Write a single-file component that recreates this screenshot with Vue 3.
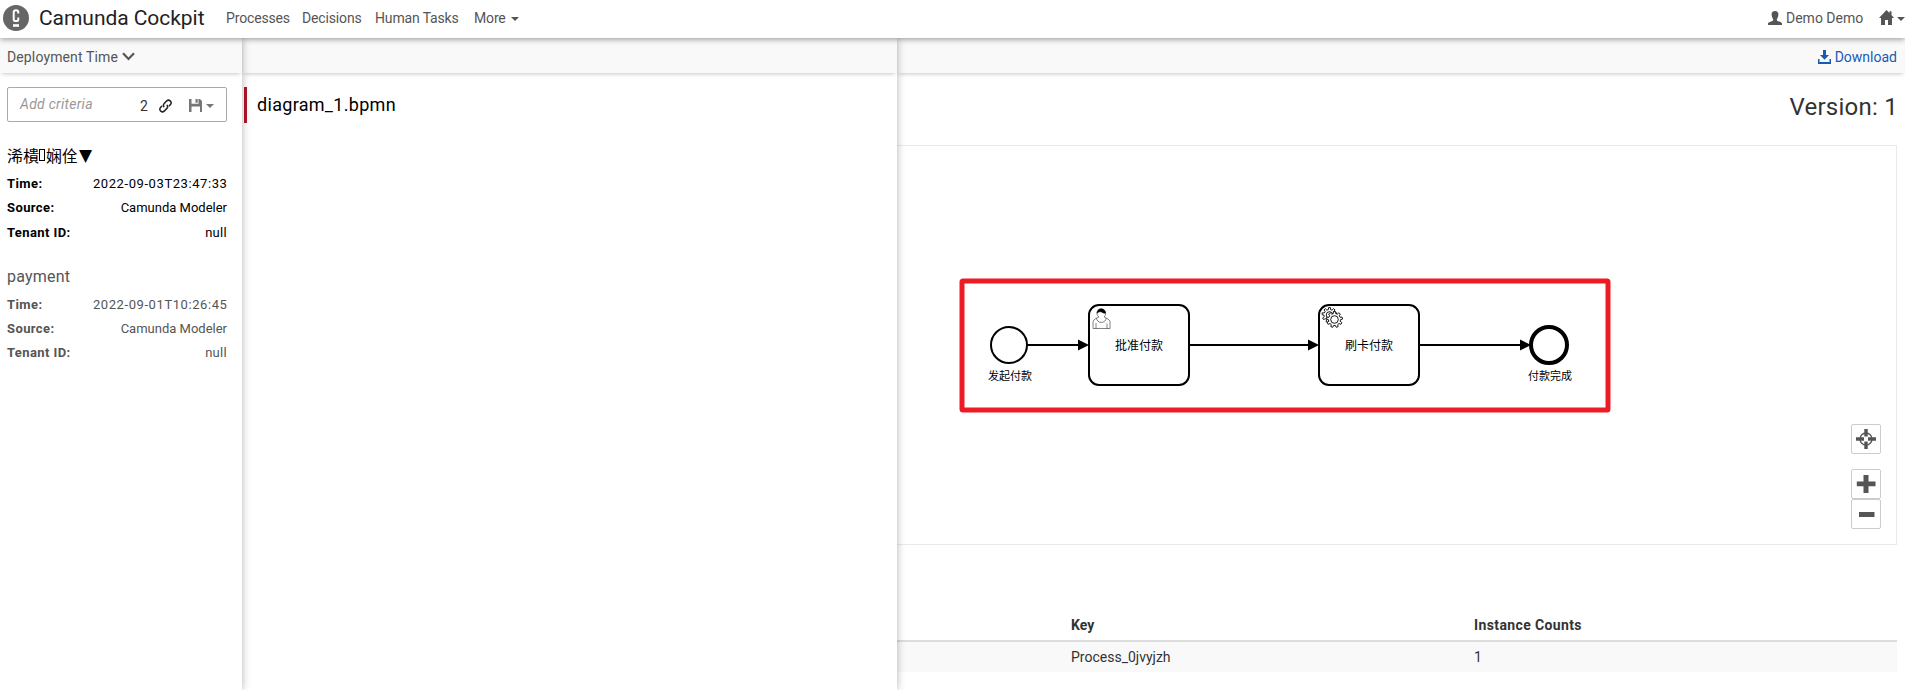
<script setup>
const deployments = [
  { active: true, time: '2022-09-03T23:47:33' },
  { active: false, name: 'payment', time: '2022-09-01T10:26:45' },
]

// Outline of a cog wheel with evenly spaced teeth.
function gear(cx, cy, outer, inner, teeth) {
  const step = (Math.PI * 2) / teeth
  const at = (r, a) => `${(cx + r * Math.cos(a)).toFixed(2)},${(cy + r * Math.sin(a)).toFixed(2)}`
  const pts = []
  for (let i = 0; i < teeth; i++) {
    const a = i * step - Math.PI / 2
    pts.push(at(inner, a - step * 0.3), at(outer, a - step * 0.18), at(outer, a + step * 0.18), at(inner, a + step * 0.3))
  }
  return `M${pts.join('L')}Z`
}
const backGear = gear(1329.5, 315, 7.5, 5.5, 9)
const frontGear = gear(1334.5, 319.5, 8, 6, 9)
</script>

<template>
  <div class="page">
    <header class="top">
      <svg class="logo" width="26" height="26" viewBox="0 0 26 26">
        <circle cx="13" cy="13" r="13" fill="#666" />
        <path d="M15.300 8.600V7.200Q15.300 5.300 13 5.300T10.700 7.200V14.200Q10.700 16.100 13 16.100T15.300 14.200V12.600" fill="none" stroke="#fff" stroke-width="2" />
        <path d="M10 19.200h6v2.600h-6z" fill="#fff" />
      </svg>
      <span class="brand">Camunda Cockpit</span>
      <nav class="nav">
        <a class="n1">Processes</a><a class="n2">Decisions</a><a class="n3">Human Tasks</a>
        <a class="n4">More</a><i class="caret"></i>
      </nav>
      <div class="account">
        <svg width="14" height="14" viewBox="0 0 14 14"><path d="M7 0C4.500 0 3.500 1.500 3.600 3.600 3.700 5.900 4.500 7.200 5.100 8V9.400C4.700 10.200 0 11.100 0 12.400V14H14V12.400C14 11.100 9.300 10.200 8.900 9.400V8C9.500 7.200 10.300 5.900 10.400 3.600 10.500 1.500 9.500 0 7 0Z" fill="#555" /></svg>
        <span class="user">Demo Demo</span>
        <svg class="home" width="15" height="15" viewBox="0 0 15 15"><path d="M7.500 0L10.500 3V1.200H12.500V5L15 8H13V15H9V10H6V15H2V8H0Z" fill="#555" /></svg>
        <i class="caret"></i>
      </div>
    </header>

    <div class="body">
      <aside class="col deployments">
        <div class="bar">
          <span class="sort">Deployment Time</span>
          <svg class="chev" width="13" height="9" viewBox="0 0 13 9"><path d="M1 1.300L6.500 7L12 1.300" fill="none" stroke="#555" stroke-width="2.200" /></svg>
        </div>
        <div class="search">
          <span class="criteria">Add criteria</span>
          <span class="count">2</span>
          <svg class="link" width="13" height="14" viewBox="0 0 13 14" fill="none" stroke="#222" stroke-width="1.500" stroke-linecap="round"><path d="M4.800 7.600Q3.800 6 5.200 4.500L7.800 1.800Q9.500.4 11.200 1.900T11.700 5.200L10.300 6.700" /><path d="M8.200 6.300Q9.300 8 7.900 9.400L5.200 12.200Q3.500 13.600 1.800 12.100T1.300 8.800L2.700 7.300" /></svg>
          <svg class="save" width="13" height="13" viewBox="0 0 13 13"><path d="M0 0H2.500V4.700H9.500V0H11L13 2V13H11V7.500H2.500V13H0ZM6.500 0H8.700V3.700H6.500Z" fill="#777" fill-rule="evenodd" /></svg>
          <i class="caret grey"></i>
        </div>
        <section v-for="d in deployments" :key="d.time" class="deployment" :class="{ active: d.active }">
          <h4 v-if="d.name">{{ d.name }}</h4>
          <h4 v-else class="cjk">浠樻<i class="missing"></i>娴佺<span class="tri">▼</span></h4>
          <dl>
            <div><dt>Time:</dt><dd class="date">{{ d.time }}</dd></div>
            <div><dt>Source:</dt><dd>Camunda Modeler</dd></div>
            <div><dt>Tenant ID:</dt><dd class="null">null</dd></div>
          </dl>
        </section>
      </aside>

      <aside class="col resources">
        <div class="bar"></div>
        <div class="resource">diagram_1.bpmn</div>
      </aside>

      <main class="detail">
        <div class="bar right">
          <svg width="13" height="14" viewBox="0 0 13 14"><path d="M5 0H8V5H11L6.500 9.800L2 5H5ZM0 9H1.500V12H11.500V9H13V14H0Z" fill="#155cb5" /></svg>
          <span class="download">Download</span>
        </div>
        <h3 class="version">Version: 1</h3>
        <div class="diagram">
          <svg class="canvas" width="999" height="398" viewBox="897 146 999 398">
            <g fill="none" stroke="#000" stroke-width="2">
              <circle cx="1009" cy="345" r="18" />
              <rect x="1089" y="305" width="100" height="80" rx="10" />
              <rect x="1319" y="305" width="100" height="80" rx="10" />
              <path d="M1027 345H1080M1189 345H1310M1419 345H1522" />
              <circle cx="1549" cy="345" r="18" stroke-width="4" />
            </g>
            <path d="M1078 339.500L1089 345L1078 350.500ZM1308 339.500L1319 345L1308 350.500ZM1520 339.500L1531 345L1520 350.500Z" />
            <g transform="translate(1089 305)" stroke="#000" stroke-width=".5">
              <path fill="#fff" d="m15,12c.909-.845 1.594-2.049 1.594-3.385 0-2.554-1.805-4.622-4.357-4.622-2.552 0-4.288 2.068-4.288 4.622 0 1.348.974 2.562 1.896 3.405-.529.187-5.669 2.097-5.794 4.756v6.718h17v-6.718c0-2.298-5.528-4.595-6.051-4.776zm-8,6l0,5.500m11,0l0-5" />
              <path fill="#fff" d="m17.162,13.009c0,2.447-2.158,4.431-4.821,4.431-2.665,0-4.822-1.981-4.822-4.431" />
              <path d="m8.100,8.200c0,0 2.251-2.358 4.274-1.177 2.024,1.181 4.221,1.537 4.124.965-.098-.57-.117-3.791-4.191-4.136-3.572,0-4.208,3.067-4.207,4.348z" />
            </g>
            <g fill="#fff" stroke="#000" stroke-width=".9">
              <path :d="backGear" /><circle cx="1329.500" cy="315" r="3.300" />
              <path :d="frontGear" /><circle cx="1334.500" cy="319.500" r="3.800" />
            </g>
            <g class="label" text-anchor="middle">
              <text x="1010" y="380" font-size="11">发起付款</text>
              <text x="1139" y="349.500" font-size="12">批准付款</text>
              <text x="1369" y="349.500" font-size="12">刷卡付款</text>
              <text x="1550" y="380" font-size="11">付款完成</text>
            </g>
            <rect x="962" y="281" width="646" height="129" rx="1" fill="none" stroke="#ed1c24" stroke-width="5" />
          </svg>
          <div class="controls">
            <button class="reset"><svg width="20" height="20" viewBox="0 0 20 20"><circle cx="10" cy="10" r="6" fill="none" stroke="#555" stroke-width="1.300" /><path d="M8.300 0H11.700V7.500H8.300ZM8.300 12.500H11.700V20H8.300ZM0 8.200H8V11.800H0ZM12 8.200H20V11.800H12Z" fill="#555" /></svg></button>
            <button class="plus"><svg width="20" height="20" viewBox="0 0 20 20"><path d="M7.500 1H12.500V7.500H19.500V12.300H12.500V19H7.500V12.300H.8V7.500H7.500Z" fill="#555" /></svg></button>
            <button class="minus"><svg width="20" height="20" viewBox="0 0 20 20"><path d="M3 8H18.500V13H3Z" fill="#555" /></svg></button>
          </div>
        </div>
        <table class="definitions">
          <thead><tr><th class="name"></th><th class="key">Key</th><th class="counts">Instance Counts</th></tr></thead>
          <tbody><tr><td></td><td>Process_0jvyjzh</td><td>1</td></tr></tbody>
        </table>
      </main>
    </div>
  </div>
</template>

<style>
body { margin: 0; overflow: hidden; background: #fff; }
</style>

<style scoped>
.page { height: 690px; display: flex; flex-direction: column; overflow: hidden; font: 14px/20px Roboto, "Noto Sans CJK SC", sans-serif; color: #333; white-space: nowrap; }
.page *, .page { box-sizing: border-box; }
svg { display: block; flex: none; }
.top { position: relative; z-index: 5; flex: none; height: 38px; display: flex; align-items: center; padding: 0 0 2px 3px; background: #fff; color: #555; box-shadow: 0 1px 6px rgba(0, 0, 0, .42); }
.logo { margin-top: -1px; }
.brand { margin-left: 10px; width: 187px; font-size: 21px; color: #222; letter-spacing: -.05px; }
.nav { display: flex; align-items: center; letter-spacing: -.15px; }
.n1 { width: 76px; } .n2 { width: 73px; } .n3 { width: 99px; } .n4 { width: 37px; }
.caret { flex: none; width: 0; height: 0; border: 4px solid transparent; border-top-color: #555; border-bottom: 0; margin-top: 2px; }
.caret.grey { border-top-color: #777; }
.account { margin-left: auto; width: 137px; display: flex; align-items: center; }
.user { margin-left: 4px; width: 93px; }
.home { margin: -1px 3px 0 0; }
.body { flex: 1; min-height: 0; display: flex; }
.col { position: relative; flex: none; background: #fff; box-shadow: 0 0 8px rgba(0, 0, 0, .3); }
.deployments { z-index: 3; width: 242px; }
.resources { z-index: 2; width: 655px; }
.detail { flex: 1; min-width: 0; }
.bar { height: 35px; display: flex; align-items: center; padding: 2px 8px 0 7px; background: #f9f9f9; box-shadow: 0 3px 4px -2px rgba(0, 0, 0, .22); color: #555; }
.sort { letter-spacing: .13px; }
.chev { margin-left: 4px; }
.search { height: 35px; margin: 14px 15px 0 7px; padding: 0 12px; display: flex; align-items: center; border: 1px solid #aaa; border-radius: 2px; }
.criteria { width: 120px; color: #999; font-style: italic; padding-bottom: 2px; letter-spacing: .27px; }
.count { width: 19px; color: #333; padding-top: 2px; }
.link { margin-top: 2px; width: 13px; }
.save { margin: 1px 4px 0 17px; }
.deployment { margin: 22px 15px 0 7px; color: #555; font-size: 13px; }
.deployment + .deployment { margin-top: 20px; }
.deployment.active { color: #000; }
h4 { margin: 0; height: 24px; line-height: 24px; font-size: 16px; font-weight: 400; letter-spacing: .2px; }
.cjk { display: flex; align-items: center; font-family: "Noto Sans CJK SC", sans-serif; letter-spacing: 0; position: relative; top: -1px; }
.missing { width: 6px; height: 12px; margin: 0 1px 0 0; border: 1px solid #000; }
.tri { font: 17px/24px "DejaVu Sans", sans-serif; margin-left: 1px; }
dl { margin: 4px 0 0; }
dl div { height: 24.300px; line-height: 24px; display: flex; justify-content: space-between; }
dt { font-weight: 700; letter-spacing: .4px; } dd { margin: 0; }
.date { letter-spacing: .58px; margin-right: -.5px; }
.null { letter-spacing: .3px; }
.resource { height: 36px; margin: 14px 0 0 2px; border-left: 3px solid #b5152b; padding-left: 10px; line-height: 36px; font-size: 18px; letter-spacing: .3px; color: #000; }
.right { justify-content: flex-end; color: #155cb5; }
.download { margin-left: 4px; }
.version { margin: 18px 7px 0 0; height: 54px; line-height: 32px; text-align: right; font-size: 24px; font-weight: 400; letter-spacing: .25px; }
.diagram { position: relative; height: 400px; margin-right: 8px; border: 1px solid #eaeaea; border-left: 0; }
.label { font-family: "Noto Sans CJK SC", sans-serif; }
.controls { position: absolute; right: 15px; top: 278px; display: flex; flex-direction: column; }
button { width: 30px; height: 30px; padding: 0; display: flex; align-items: center; justify-content: center; background: #fff; border: 1px solid #ccc; border-radius: 2px; }
.plus { margin-top: 15px; }
.definitions { margin-top: 64px; width: 1000px; border-collapse: collapse; table-layout: fixed; }
.name { width: 169px; } .key { width: 403px; }
th { height: 32px; padding: 0 5px; text-align: left; font-weight: 700; border-bottom: 2px solid #ddd; }
.counts { letter-spacing: .38px; }
td { height: 31px; padding: 0 5px; background: #f9f9f9; }
</style>
